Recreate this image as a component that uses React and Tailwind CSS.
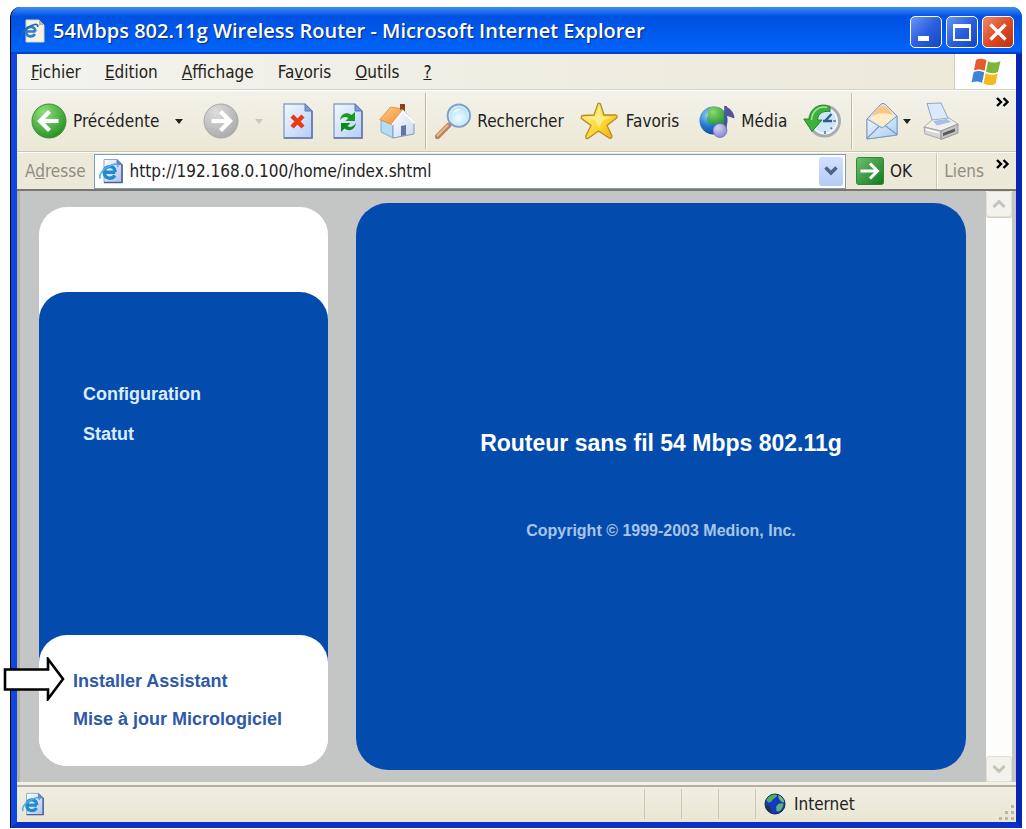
import React from "react";

const UI = "font-['DejaVu_Sans_Condensed','DejaVu_Sans',sans-serif] text-[17px] leading-5";

function IePage({ className }) {
  return (
    <svg viewBox="0 0 26 26" className={className} aria-hidden="true">
      <defs>
        <linearGradient id="iepage" x1="0" y1="0" x2="1" y2="1">
          <stop offset="0" stopColor="#ffffff" />
          <stop offset="1" stopColor="#a9c1ee" />
        </linearGradient>
      </defs>
      <path d="M6 1.5H19L24 6.5V24.5H6Z" fill="url(#iepage)" stroke="#8fa6d2" />
      <path d="M24 6.5V24.5H6" fill="none" stroke="#4c6098" strokeWidth="1.6" />
      <path d="M19 1.5V6.5H24Z" fill="#6d86c0" stroke="#5a72a8" strokeWidth=".8" />
      <path d="M17.3 14.2H6.300C6.500 10.500 8.700 8.600 11.800 8.600S17 10.800 17.200 14.200M6.300 14.500C6.500 18.200 8.700 20.200 11.800 20.200C14.200 20.200 15.800 19.300 16.800 17.400" fill="none" stroke="#2389cf" strokeWidth="3.400" />
      <path d="M2.500 20.500C-.5 17 6.5 8.500 17 6.200C19.500 5.800 20.500 7 19.500 8.800" fill="none" stroke="#4fb0e6" strokeWidth="1.700" />
    </svg>
  );
}

function TitlePage() {
  return (
    <svg viewBox="0 0 24 24" className="size-6 shrink-0" aria-hidden="true">
      <path d="M5 1H18L23 6V23H5Z" fill="#f6f3e6" stroke="#d8d2ba" />
      <path d="M18 1V6H23Z" fill="#b9b08e" />
      <path d="M14.500 12.500H5C5.200 9.500 7 8 9.600 8S14.200 9.600 14.400 12.500M5 12.500C5.200 15.800 7 17.300 9.600 17.300C11.500 17.300 13 16.500 13.800 15" fill="none" stroke="#2b7fd2" strokeWidth="2.700" />
      <path d="M1.500 17.500C-1 14.500 5.500 7.500 13.500 5.500C16 5 17.500 6 16.500 8" fill="none" stroke="#2466b8" strokeWidth="1.600" />
    </svg>
  );
}

function RoundArrow({ id, light, dark, rim, flip }) {
  return (
    <svg viewBox="0 0 36 36" className="size-9 shrink-0" aria-hidden="true">
      <defs>
        <radialGradient id={id} cx=".35" cy=".25" r=".85">
          <stop offset="0" stopColor={light} />
          <stop offset="1" stopColor={dark} />
        </radialGradient>
      </defs>
      <circle cx="18" cy="18" r="17" fill={`url(#${id})`} stroke={rim} strokeWidth="1" />
      <g transform={flip ? "matrix(-1 0 0 1 36 0)" : undefined} fill="none" stroke="#fff" strokeWidth="4.200">
        <path d="M9.500 18H27.500" />
        <path d="M18.500 8.500L9 18L18.500 27.500" strokeLinejoin="miter" />
      </g>
    </svg>
  );
}

function Sheet({ id, children }) {
  return (
    <svg viewBox="0 0 30 36" className="h-9 w-[30px] shrink-0" aria-hidden="true">
      <defs>
        <linearGradient id={id} x1="0" y1="0" x2="1" y2="1">
          <stop offset="0" stopColor="#f4f8ff" />
          <stop offset="1" stopColor="#b6cdf8" />
        </linearGradient>
      </defs>
      <path d="M1 1H22L29 8V35H1Z" fill={`url(#${id})`} stroke="#8c9ecc" strokeWidth="1.400" />
      <path d="M29 8V35H1" fill="none" stroke="#6478b0" strokeWidth="1.600" />
      <path d="M22 1V8H29Z" fill="#7f97cf" stroke="#6379b5" />
      {children}
    </svg>
  );
}

function StopIcon() {
  return (
    <Sheet id="sheetStop">
      <path d="M9 13L20 24M20 13L9 24" stroke="#e8391b" strokeWidth="4.400" fill="none" />
    </Sheet>
  );
}

function RefreshIcon() {
  return (
    <Sheet id="sheetRefresh">
      <path d="M7 17C8 10 14 8.500 18.500 12L22 9V18H12.500L15.500 15C12.500 13 9.500 14 7 17Z" fill="#189a22" />
      <path d="M23 20C22 27 16 29 11.500 25.500L8 29V20H17.500L14.500 23C17.500 25 20.500 23.500 23 20Z" fill="#0e8a1a" />
    </Sheet>
  );
}

function HomeIcon() {
  return (
    <svg viewBox="0 0 36 36" className="size-9 shrink-0" aria-hidden="true">
      <defs>
        <linearGradient id="roof" x1="0" y1="0" x2="1" y2="1">
          <stop offset="0" stopColor="#ffd08a" />
          <stop offset="1" stopColor="#ee8a30" />
        </linearGradient>
        <linearGradient id="wall" x1="0" y1="0" x2="1" y2="1">
          <stop offset="0" stopColor="#ffffff" />
          <stop offset="1" stopColor="#c4d8f4" />
        </linearGradient>
      </defs>
      <path d="M2 17L14 22V35L2 29Z" fill="#b4dcf2" stroke="#7f9cc4" strokeWidth=".8" />
      <path d="M24.500 7L35 20V31L14 35V21Z" fill="url(#wall)" stroke="#8398bd" strokeWidth="1" />
      <path d="M.8 16.500L11.500 4L24 6L13 21.500Z" fill="url(#roof)" stroke="#d98a3c" strokeWidth=".8" />
      <path d="M21 1H26V8.500L23 6L21 7Z" fill="#8c4024" />
      <path d="M13 22L24 8L35.500 20.500" fill="none" stroke="#fff" strokeWidth="1.600" />
      <path d="M22 23L27 22V32L22 33Z" fill="#6672aa" />
    </svg>
  );
}

function SearchIcon() {
  return (
    <svg viewBox="0 0 37 37" className="size-9 shrink-0" aria-hidden="true">
      <defs>
        <radialGradient id="lens" cx=".5" cy=".6" r=".6">
          <stop offset="0" stopColor="#f2fdff" />
          <stop offset="1" stopColor="#a8dcf4" />
        </radialGradient>
      </defs>
      <path d="M2.500 34.500L14 23" stroke="#b98062" strokeWidth="5.500" strokeLinecap="round" />
      <path d="M2.500 33.500L13 23" stroke="#e6b48c" strokeWidth="2.400" strokeLinecap="round" />
      <circle cx="24.500" cy="13" r="11.500" fill="url(#lens)" stroke="#7f9fce" strokeWidth="2" />
      <circle cx="24.500" cy="13" r="9.800" fill="none" stroke="#d8ecfa" strokeWidth="1.200" />
      <path d="M18 11C19 7 23 5.500 27 6.500C24 8 20 9 18 11Z" fill="#fff" />
    </svg>
  );
}

function StarIcon() {
  return (
    <svg viewBox="0 0 38 38" className="size-[38px] shrink-0" aria-hidden="true">
      <defs>
        <linearGradient id="star" x1="0" y1="0" x2="1" y2="1">
          <stop offset="0" stopColor="#fff59a" />
          <stop offset=".6" stopColor="#fbd535" />
          <stop offset="1" stopColor="#e8a914" />
        </linearGradient>
      </defs>
      <path d="M18 1.500Q20 .5 20.800 3L24 13H36Q38 14 36.500 16L27 23.500L32 34Q32 37 29 36L18.500 29L8 36.500Q5 37 6 33.500L11 23.500L1.500 16.500Q.5 14 3 13.500L14 13Z" fill="url(#star)" stroke="#b98a1d" strokeWidth="1.300" />
      <path d="M19 5L21.500 14.500L32 15.500L23 18L19 26L15 18L5 16L16 14.500Z" fill="#fff8b0" opacity=".6" />
    </svg>
  );
}

function MediaIcon() {
  return (
    <svg viewBox="0 0 36 36" className="size-9 shrink-0" aria-hidden="true">
      <defs>
        <radialGradient id="mglobe" cx=".3" cy=".3" r=".8">
          <stop offset="0" stopColor="#8fd0f6" />
          <stop offset=".5" stopColor="#2377cf" />
          <stop offset="1" stopColor="#153c8c" />
        </radialGradient>
        <radialGradient id="mland" cx=".3" cy=".3" r=".9">
          <stop offset="0" stopColor="#8fd86e" />
          <stop offset="1" stopColor="#168a30" />
        </radialGradient>
        <radialGradient id="note" cx=".35" cy=".3" r=".8">
          <stop offset="0" stopColor="#d4d4fa" />
          <stop offset="1" stopColor="#8180ca" />
        </radialGradient>
      </defs>
      <circle cx="14.500" cy="17.500" r="14" fill="url(#mglobe)" />
      <path d="M10 5C15 2.500 22 4 25 8C28 12 28.500 18 26 21C22 22 19 20 15 21C10 22 8 19 8 15C10 12 8 9 10 5Z" fill="url(#mland)" />
      <path d="M26.500 3V27" stroke="#4d4f9d" strokeWidth="2.600" />
      <path d="M26 3C30 5 35 8 35.500 15C34 16 31 13 26 13Z" fill="#54559c" />
      <ellipse cx="21" cy="27.500" rx="7" ry="7" fill="url(#note)" stroke="#6d6cb4" strokeWidth=".7" />
    </svg>
  );
}

function HistoryIcon() {
  return (
    <svg viewBox="0 0 38 36" className="h-9 w-[38px] shrink-0" aria-hidden="true">
      <circle cx="21.500" cy="18" r="15" fill="#e4effa" stroke="#a9adb3" strokeWidth="3" />
      <circle cx="21.500" cy="18" r="12.500" fill="#cfe6f8" stroke="#f4f8fb" strokeWidth="1.400" />
      <path d="M22 18L28.500 11M20 18H29" stroke="#2c5d8c" strokeWidth="2.400" fill="none" />
      <path d="M22 28V31M33 18H30M29 26L27.500 24.500" stroke="#63788e" strokeWidth="1.600" />
      <path d="M27 4C17 -1 7 5 6.500 16H.8L9 28.500L19 17H14.500C15 11 19 7.500 27 8.500Z" fill="#3fb03e" stroke="#25852c" strokeWidth="1" />
      <path d="M24 4.500C16 2.500 9 8 8.500 17" fill="none" stroke="#a2e592" strokeWidth="1.400" />
    </svg>
  );
}

function MailIcon() {
  return (
    <svg viewBox="0 0 34 38" className="h-[38px] w-[34px] shrink-0" aria-hidden="true">
      <defs>
        <linearGradient id="env" x1="0" y1="0" x2="1" y2="1">
          <stop offset="0" stopColor="#f2f9ff" />
          <stop offset="1" stopColor="#a5cbf0" />
        </linearGradient>
      </defs>
      <path d="M2 17L16 2Q18 .8 20 2L32 14V33L2 37Z" fill="#d3e2f0" stroke="#8096b8" />
      <path d="M5 17L16 5Q20 2 23 6L30 14L18 25Z" fill="#ffecc8" />
      <path d="M8 14C10 8 16 3 19 4C23 5 26 10 28 13C20 10 12 11 8 14Z" fill="#fbc684" />
      <path d="M2 17L17 26L32 14V33L2 37Z" fill="url(#env)" stroke="#7d9ac2" />
      <path d="M2 36.500L14 24.500M32 32.500L20 23.500" stroke="#7d9ac2" strokeWidth="1.200" />
    </svg>
  );
}

function PrinterIcon() {
  return (
    <svg viewBox="0 0 36 38" className="h-[38px] w-9 shrink-0" aria-hidden="true">
      <path d="M4 1.500L18 1L26 18L10 21Z" fill="#dbe9fc" stroke="#8fa3cb" />
      <path d="M1 25L9 18L26 16L35 22L18 29Z" fill="#efefef" stroke="#9e9e9e" strokeWidth=".8" />
      <path d="M10 19L24 17L28 20L14 23.500Z" fill="#a8bee4" />
      <path d="M1 25L18 29V37L2 32Z" fill="#d6d6d8" stroke="#9a9a9a" strokeWidth=".8" />
      <path d="M18 29L35 22V31L18 37.500Z" fill="#c2c2c4" stroke="#8b8b8b" strokeWidth=".8" />
      <path d="M20 31L32 26.500V29.500L20 34Z" fill="#5a5a5e" />
      <path d="M3 27.500L16 31" stroke="#fff" strokeWidth="1.500" />
    </svg>
  );
}

function WindowsFlag() {
  return (
    <svg viewBox="0 0 30 28" className="h-7 w-[30px]" aria-hidden="true">
      <path d="M5 2C8 .3 12 .3 15.500 2.300L13.500 13C10 11 6.500 11 3 12.500Z" fill="#e8592b" />
      <path d="M17 3.200C20.500 5 25 5 29.500 3L27 14C23 15.800 19 15.500 15 13.800Z" fill="#7cb63a" />
      <path d="M2.700 14C6 12.500 10 12.500 13.200 14.500L11 25C8 23 4 23 .5 24.500Z" fill="#3f82d8" />
      <path d="M14.700 15.300C18.500 17.200 22.500 17.200 26.700 15.500L24.500 26C20.500 28 16.500 27.500 12.500 25.800Z" fill="#f5bb1e" />
    </svg>
  );
}

function GlobeIcon() {
  return (
    <svg viewBox="0 0 22 22" className="size-[22px]" aria-hidden="true">
      <circle cx="11" cy="11" r="10" fill="#1537c6" stroke="#11205c" />
      <path d="M2.500 7C5 1.500 11 1 13 2C13 5 9 5 8 8C6 10 3 10 2.500 7Z" fill="#4fae55" />
      <path d="M14 2C18 3.500 20.500 7 20 9.500C16.500 9 14.500 6 14 2Z" fill="#6cc470" />
      <path d="M12 14C13 11 18 9 19.500 11C19 15 16 19 13.500 18.500C11.500 17.500 13 16 12 14Z" fill="#5fb565" />
      <path d="M1.500 12C5 12 7.500 15 7.500 20C4 18.500 1.500 15 1.500 12Z" fill="#1f3a2e" />
    </svg>
  );
}

function Caret({ className }) {
  return (
    <svg viewBox="0 0 8 5" className={"h-[5px] w-2 shrink-0 " + className} aria-hidden="true">
      <path d="M0 0H8L4 5Z" fill="currentColor" />
    </svg>
  );
}

function More({ label }) {
  return (
    <button type="button" aria-label={label} className="shrink-0 text-black">
      <svg viewBox="0 0 14 10" className="h-[10px] w-[14px]" aria-hidden="true">
        <path d="M1 1L5 5L1 9M7.500 1L11.500 5L7.500 9" fill="none" stroke="currentColor" strokeWidth="2.400" />
      </svg>
    </button>
  );
}

function ToolButton({ label, children, className = "" }) {
  return (
    <button type="button" aria-label={label} className={"flex shrink-0 items-center " + className}>
      {children}
    </button>
  );
}

function Divider() {
  return <span className="h-[56px] w-[2px] shrink-0 border-l border-[#bcb9a8] bg-[#fbfaf4]" />;
}

function TitleBar() {
  const btn = "flex size-8 items-center justify-center rounded-[5px] border border-white";
  const blue = "bg-linear-to-br from-[#6a95f5] via-[#2a5fe0] to-[#1745c4]";
  return (
    <header className="flex h-[47px] items-center rounded-t-[10px] bg-linear-to-b from-[#3b8dfb] via-[#0050e0] via-20% to-[#0066fb] pr-2 pl-[10px] shadow-[inset_0_-2px_1px_#0a3fc4]">
      <TitlePage />
      <h1 className="ml-2 grow truncate font-['Open_Sans','Noto_Sans',sans-serif] text-[20px] leading-7 font-semibold text-white [text-shadow:1px_1px_1px_#0a2a80]">
        54Mbps 802.11g Wireless Router - Microsoft Internet Explorer
      </h1>
      <div className="flex gap-1 pt-[2px]">
        <button type="button" aria-label="Réduire" className={btn + " " + blue}>
          <svg viewBox="0 0 30 30" className="size-[30px]"><path d="M7 19H18V24H7Z" fill="#fff" /></svg>
        </button>
        <button type="button" aria-label="Agrandir" className={btn + " " + blue}>
          <svg viewBox="0 0 30 30" className="size-[30px]"><path d="M7 9V23H23V9" fill="none" stroke="#fff" strokeWidth="2" /><path d="M6 7H24V11H6Z" fill="#fff" /></svg>
        </button>
        <button type="button" aria-label="Fermer" className={btn + " bg-linear-to-br from-[#ee8a68] via-[#dd4c26] to-[#bb3011]"}>
          <svg viewBox="0 0 30 30" className="size-[30px]"><path d="M7.500 7.500L22.500 22.500M22.500 7.500L7.500 22.500" stroke="#fff" strokeWidth="3.200" /></svg>
        </button>
      </div>
    </header>
  );
}

function MenuBar() {
  return (
    <div className="flex h-9 border-b border-[#d5d2c3] bg-linear-to-r from-[#f3f3ee] to-[#ece9d8]">
      <nav className="flex grow items-center gap-6 pl-[14px]">
        <button type="button"><u>F</u>ichier</button>
        <button type="button"><u>E</u>dition</button>
        <button type="button"><u>A</u>ffichage</button>
        <button type="button">Fa<u>v</u>oris</button>
        <button type="button"><u>O</u>utils</button>
        <button type="button"><u>?</u></button>
      </nav>
      <div className="flex w-[62px] items-center justify-center border-l border-[#cfccbd] bg-white">
        <WindowsFlag />
      </div>
    </div>
  );
}

function ToolBar() {
  return (
    <div className="flex h-[62px] items-center border-t border-b border-t-white border-b-[#c9c6b5] bg-linear-to-b from-[#f3f2ea] to-[#ece8d5] pr-[6px] pl-[14px]">
      <ToolButton label="Précédente" className="gap-[6px]">
        <RoundArrow id="back" light="#8fe07a" dark="#1f8c1c" rim="#3b8f35" />
        <span>Précédente</span>
        <Caret className="ml-[10px]" />
      </ToolButton>
      <ToolButton label="Suivante" className="ml-5 gap-4 text-[#c9c6bb]">
        <RoundArrow id="forward" light="#dedede" dark="#a6a6a6" rim="#a9a9a9" flip />
        <Caret className="" />
      </ToolButton>
      <ToolButton label="Arrêter" className="ml-5"><StopIcon /></ToolButton>
      <ToolButton label="Actualiser" className="ml-5"><RefreshIcon /></ToolButton>
      <ToolButton label="Démarrage" className="mr-[10px] ml-4"><HomeIcon /></ToolButton>
      <Divider />
      <ToolButton label="Rechercher" className="ml-2 gap-[6px]"><SearchIcon /><span>Rechercher</span></ToolButton>
      <ToolButton label="Favoris" className="ml-4 gap-2"><StarIcon /><span>Favoris</span></ToolButton>
      <ToolButton label="Média" className="ml-5 gap-[6px]"><MediaIcon /><span>Média</span></ToolButton>
      <ToolButton label="Historique" className="mr-[10px] ml-4"><HistoryIcon /></ToolButton>
      <Divider />
      <ToolButton label="Courrier" className="ml-3 gap-1"><MailIcon /><Caret className="" /></ToolButton>
      <ToolButton label="Imprimer" className="ml-3"><PrinterIcon /></ToolButton>
      <div className="ml-auto flex self-start pt-[6px]"><More label="Plus de boutons" /></div>
    </div>
  );
}

function AddressBar() {
  return (
    <form className="flex h-[39px] items-center border-t border-b-2 border-t-white border-b-[#77776c] bg-[#ece9d8] pr-[6px] pl-2" onSubmit={(e) => e.preventDefault()}>
      <label htmlFor="adresse" className="mr-2 text-[#8f8d82]">A<u>d</u>resse</label>
      <div className="flex h-[35px] min-w-0 grow items-center border border-[#7f9db9] bg-white pr-[2px] pl-[3px]">
        <IePage className="size-[26px] shrink-0" />
        <input id="adresse" type="text" defaultValue="http://192.168.0.100/home/index.shtml" className="ml-[6px] min-w-0 grow bg-transparent outline-none" />
        <button type="button" aria-label="Dérouler" className="flex h-[29px] w-6 shrink-0 items-center justify-center rounded-[3px] bg-linear-to-b from-[#d3e0fd] to-[#b4caf7]">
          <svg viewBox="0 0 14 10" className="h-[10px] w-[14px]"><path d="M1.500 1.500L7 7L12.500 1.500" fill="none" stroke="#4d6185" strokeWidth="3.400" /></svg>
        </button>
      </div>
      <button type="submit" className="ml-[10px] flex items-center gap-[6px]">
        <svg viewBox="0 0 28 28" className="size-7" aria-hidden="true">
          <defs>
            <linearGradient id="go" x1="0" y1="0" x2="1" y2="1">
              <stop offset="0" stopColor="#6fc072" />
              <stop offset="1" stopColor="#12791c" />
            </linearGradient>
          </defs>
          <rect x=".5" y=".5" width="27" height="27" rx="2" fill="url(#go)" stroke="#2c8a3a" />
          <path d="M4.500 14H21M14 6.500L21.500 14L14 21.500" fill="none" stroke="#fff" strokeWidth="3" />
        </svg>
        <span>OK</span>
      </button>
      <span className="ml-6 h-9 w-[2px] border-l border-[#c9c6b5] bg-white" />
      <span className="ml-[6px] text-[#8f8d82]">Liens</span>
      <div className="ml-3 flex self-start pt-[6px]"><More label="Plus de liens" /></div>
    </form>
  );
}

function ScrollButton({ label, path }) {
  return (
    <button type="button" aria-label={label} className="flex h-[26px] items-center justify-center rounded-[3px] border border-[#e2e0d4] bg-[#f3f2ec] shadow-[0_1px_0_#d2d0c4]">
      <svg viewBox="0 0 14 10" className="h-[10px] w-[14px]"><path d={path} fill="none" stroke="#c6c4b8" strokeWidth="3" /></svg>
    </button>
  );
}

function SideMenu() {
  return (
    <nav className="flex w-[289px] shrink-0 flex-col self-stretch rounded-[28px] bg-white pt-[85px] font-['Liberation_Sans',Arial,sans-serif] text-[18px] leading-6 font-bold">
      <div className="grow rounded-t-[28px] bg-[#034cad] pt-[90px] pl-11 text-[#dcecff]">
        <ul className="flex flex-col gap-4">
          <li><a href="#configuration">Configuration</a></li>
          <li><a href="#statut">Statut</a></li>
        </ul>
      </div>
      <div className="rounded-b-[28px] bg-linear-to-b from-[#034cad] from-50% to-white to-50%">
        <ul className="flex flex-col gap-[14px] rounded-[28px] bg-white pt-[34px] pb-[35px] pl-[34px] text-[#2c59a8]">
          <li className="relative">
            <a href="#assistant">Installer Assistant</a>
            <svg viewBox="0 0 62 44" className="absolute top-[-12px] left-[-70px] h-11 w-[62px]" aria-hidden="true">
              <path d="M2 12.500H45V2L60 22L45 42V32.500H2Z" fill="#fff" stroke="#000" strokeWidth="2.600" />
            </svg>
          </li>
          <li><a href="#micrologiciel">Mise à jour Micrologiciel</a></li>
        </ul>
      </div>
    </nav>
  );
}

function StatusBar() {
  return (
    <footer className="flex h-[40px] items-center border-t-[3px] border-[#f4f2e6] bg-linear-to-b from-[#f1efe2] to-[#e9e6d2] pl-1 shadow-[inset_0_2px_0_#b4b1a1]">
      <IePage className="size-6 shrink-0" />
      <div className="grow" />
      <span className="h-[30px] w-[37px] border-l border-[#cbc8b8]" />
      <span className="h-[30px] w-[37px] border-l border-[#cbc8b8]" />
      <span className="h-[30px] w-[37px] border-l border-[#cbc8b8]" />
      <div className="flex h-[30px] w-[243px] items-center gap-2 border-l border-[#cbc8b8] pl-2">
        <GlobeIcon />
        <span>Internet</span>
      </div>
      <svg viewBox="0 0 18 18" className="size-[18px] self-end" aria-hidden="true">
        <path d="M13 1H16V4H13ZM13 7H16V10H13ZM13 13H16V16H13ZM7 7H10V10H7ZM7 13H10V16H7ZM1 13H4V16H1Z" fill="#bab7a5" />
      </svg>
    </footer>
  );
}

export default function App() {
  return (
    <div className="flex min-h-screen flex-col bg-white pt-[7px] pr-1 pb-px pl-[10px]">
      <div className={"flex grow flex-col rounded-t-[10px] border-l border-black bg-[#0b3ede] text-[#222] " + UI}>
        <TitleBar />
        <div className="flex grow flex-col border-r-[6px] border-b-[6px] border-l-[6px] border-r-[#0526b4] border-b-[#0a30c4] border-l-[#0d47e4]">
          <MenuBar />
          <ToolBar />
          <AddressBar />
          <div className="flex grow border-l-[3px] border-[#b5b0a4] bg-[#c4c6c6]">
            <main className="flex grow gap-7 py-[12px] pr-5 pl-[19px]">
              <div className="flex py-1"><SideMenu /></div>
              <section className="flex grow flex-col items-center rounded-[32px] bg-[#034cad] pt-[226px] font-['Liberation_Sans',Arial,sans-serif] font-bold">
                <h2 className="text-[23px] leading-7 text-white">Routeur sans fil 54 Mbps 802.11g</h2>
                <p className="mt-[64px] text-[16px] leading-5 text-[#a9c4ea]">Copyright © 1999-2003 Medion, Inc.</p>
              </section>
            </main>
            <div className="mr-1 flex w-[26px] shrink-0 flex-col justify-between bg-[#fdfdfb]">
              <ScrollButton label="Défiler vers le haut" path="M1.500 8L7 2.500L12.500 8" />
              <ScrollButton label="Défiler vers le bas" path="M1.500 2L7 7.500L12.500 2" />
            </div>
          </div>
          <StatusBar />
        </div>
      </div>
    </div>
  );
}
